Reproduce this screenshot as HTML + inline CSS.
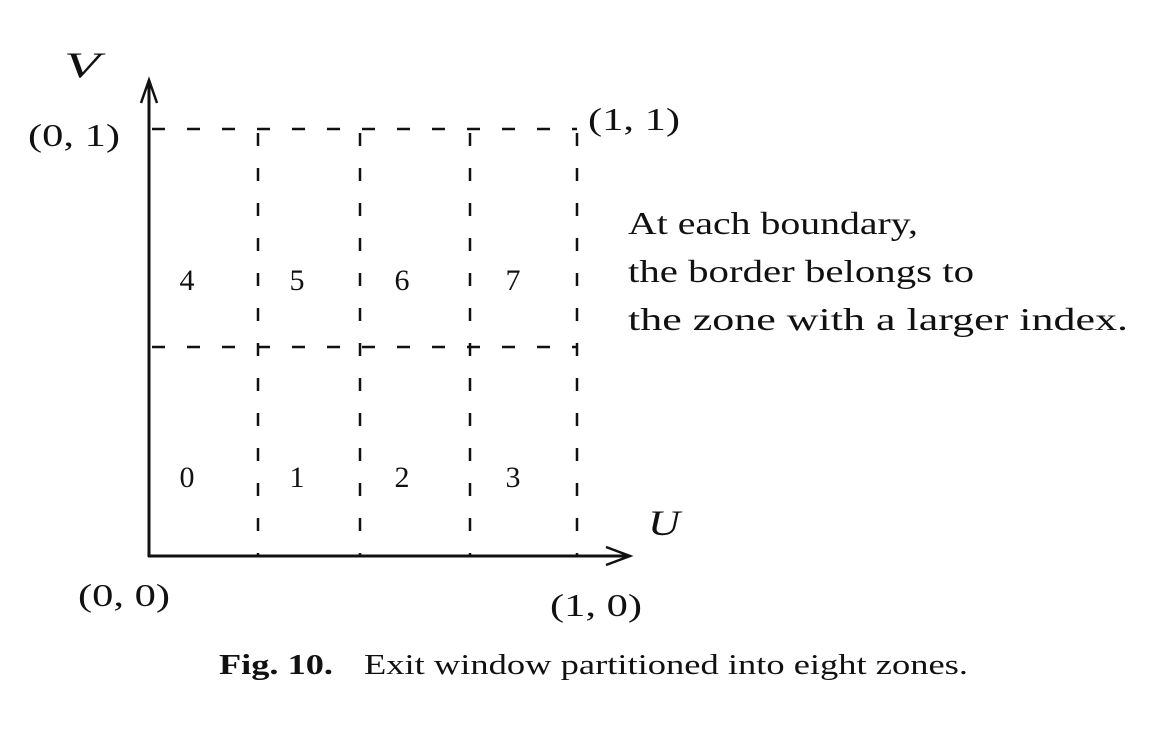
<!DOCTYPE html>
<html><head><meta charset="utf-8"><style>
body{margin:0;background:#fff;}
svg{display:block;}
text{font-family:"Liberation Serif",serif;fill:#111;}
</style></head><body>
<svg width="1150" height="729" viewBox="0 0 1150 729">
<g stroke="#111" fill="none">
<line x1="149" y1="80" x2="149" y2="557" stroke-width="3"/>
<polyline points="141,103 149,80 157,103" stroke-width="2.5"/>
<line x1="148" y1="556" x2="628" y2="556" stroke-width="3"/>
<polyline points="606,547 630,556 606,565" stroke-width="2.5"/>
<g stroke-width="2.5" stroke-dasharray="13,22">
<line x1="152" y1="129" x2="577" y2="129"/>
<line x1="152" y1="347" x2="577" y2="347"/>
<line x1="258" y1="133" x2="258" y2="556"/>
<line x1="360" y1="133" x2="360" y2="556"/>
<line x1="470" y1="133" x2="470" y2="556"/>
<line x1="577" y1="133" x2="577" y2="556"/>
</g>
</g>
<text x="64" y="77" font-size="36" font-style="italic" textLength="36" lengthAdjust="spacingAndGlyphs">V</text>
<text x="28" y="146" font-size="32" textLength="92" lengthAdjust="spacingAndGlyphs">(0, 1)</text>
<text x="588" y="130" font-size="32" textLength="92" lengthAdjust="spacingAndGlyphs">(1, 1)</text>
<text x="648" y="535" font-size="36" font-style="italic" textLength="32" lengthAdjust="spacingAndGlyphs">U</text>
<text x="78" y="606" font-size="32" textLength="92" lengthAdjust="spacingAndGlyphs">(0, 0)</text>
<text x="550" y="616" font-size="32" textLength="92" lengthAdjust="spacingAndGlyphs">(1, 0)</text>
<g font-size="30" text-anchor="middle">
<text x="187" y="290">4</text><text x="297" y="290">5</text><text x="402" y="290">6</text><text x="513" y="290">7</text>
<text x="187" y="487">0</text><text x="297" y="487">1</text><text x="402" y="487">2</text><text x="513" y="487">3</text>
</g>
<g font-size="32">
<text x="628" y="234" textLength="290" lengthAdjust="spacingAndGlyphs">At each boundary,</text>
<text x="628" y="282" textLength="346" lengthAdjust="spacingAndGlyphs">the border belongs to</text>
<text x="628" y="330" textLength="500" lengthAdjust="spacingAndGlyphs">the zone with a larger index.</text>
</g>
<text x="219" y="674" font-size="29" font-weight="bold" textLength="114" lengthAdjust="spacingAndGlyphs">Fig. 10.</text>
<text x="364" y="674" font-size="29" textLength="604" lengthAdjust="spacingAndGlyphs">Exit window partitioned into eight zones.</text>
</svg>
</body></html>
